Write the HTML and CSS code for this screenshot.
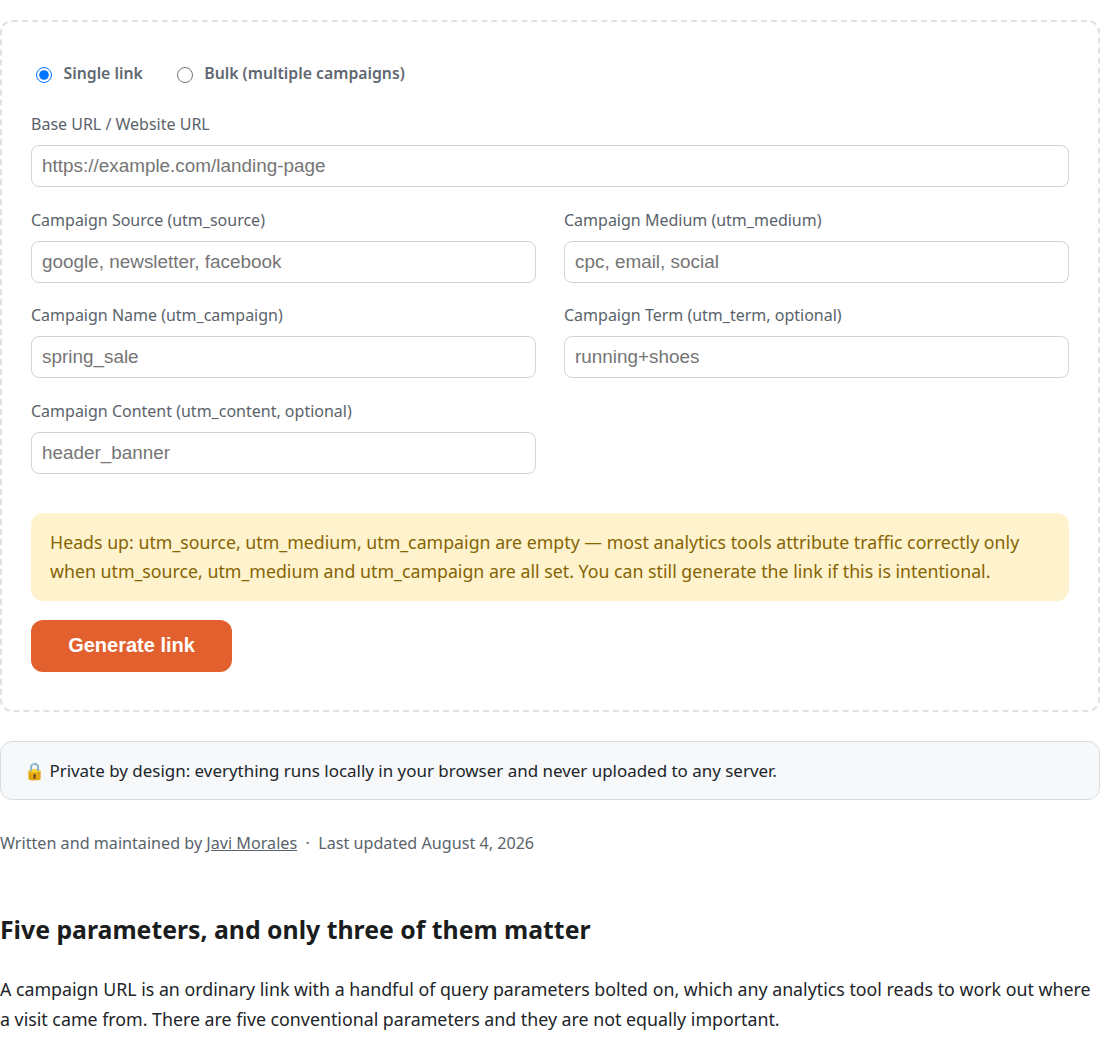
FILE: index.html

```html
<!DOCTYPE html>
<html lang="en">
<head>
  <meta charset="UTF-8">
  <meta name="viewport" content="width=device-width, initial-scale=1.0">
  <title>UTM link builder</title>
  <link rel="stylesheet" href="styles.css">
</head>
<body>
  <div class="tool-card">
    <div class="mode-group">
      <label class="mode-option"><input type="radio" name="mode" checked> Single link</label>
      <label class="mode-option"><input type="radio" name="mode"> Bulk (multiple campaigns)</label>
    </div>

    <div class="field">
      <label for="baseUrl">Base URL / Website URL</label>
      <input id="baseUrl" type="text" placeholder="https://example.com/landing-page">
    </div>

    <div class="field-grid">
      <div class="field">
        <label for="source">Campaign Source (utm_source)</label>
        <input id="source" type="text" placeholder="google, newsletter, facebook">
      </div>
      <div class="field">
        <label for="medium">Campaign Medium (utm_medium)</label>
        <input id="medium" type="text" placeholder="cpc, email, social">
      </div>
      <div class="field">
        <label for="campaign">Campaign Name (utm_campaign)</label>
        <input id="campaign" type="text" placeholder="spring_sale">
      </div>
      <div class="field">
        <label for="term">Campaign Term (utm_term, optional)</label>
        <input id="term" type="text" placeholder="running+shoes">
      </div>
      <div class="field">
        <label for="content">Campaign Content (utm_content, optional)</label>
        <input id="content" type="text" placeholder="header_banner">
      </div>
    </div>

    <div class="warning">Heads up: utm_source, utm_medium, utm_campaign are empty — most analytics tools attribute traffic correctly only when utm_source, utm_medium and utm_campaign are all set. You can still generate the link if this is intentional.</div>

    <button type="button" class="generate">Generate link</button>
  </div>

  <div class="privacy">🔒 Private by design: everything runs locally in your browser and never uploaded to any server.</div>

  <p class="byline">Written and maintained by <a href="#">Javi Morales</a> &nbsp;·&nbsp; Last updated August 4, 2026</p>

  <h2>Five parameters, and only three of them matter</h2>
  <p class="body-text">A campaign URL is an ordinary link with a handful of query parameters bolted on, which any analytics tool reads to work out where a visit came from. There are five conventional parameters and they are not equally important.</p>
</body>
</html>
```

FILE: styles.css

```css
body {
  font-family: 'Noto Sans', sans-serif;
  background: #fff;
  color: #212529;
  font-size: 17.8px;
  line-height: 30px;
  margin: 0;
  padding-top: 20px;
}

.tool-card {
  border: 2px dashed #dee2e6;
  border-radius: 12px;
  padding: 29px;
  height: 692px;
  box-sizing: border-box;
}

.mode-group {
  display: flex;
  gap: 34px;
  padding-left: 5px;
  margin: 7px 0 24px;
}

.mode-option {
  display: flex;
  align-items: center;
  gap: 11.5px;
  font-size: 15.8px;
  font-weight: 600;
  color: #5f6871;
}

.mode-option input {
  width: 16px;
  height: 16px;
  margin: 4px 0 0;
  accent-color: #0075ff;
}

.field label {
  display: block;
  font-size: 16px;
  line-height: 24px;
  color: #5a636b;
  margin-bottom: 9px;
}

.field input {
  display: block;
  width: 100%;
  height: 42px;
  box-sizing: border-box;
  padding: 0 10px;
  border: 1px solid #ced4da;
  border-radius: 8px;
  font-family: 'Liberation Sans', sans-serif;
  font-size: 18.9px;
}

.field input::placeholder {
  color: #757575;
}

.field-grid {
  display: grid;
  grid-template-columns: 1fr 1fr;
  column-gap: 28px;
  row-gap: 20.4px;
  margin-top: 21px;
}

.warning {
  background: #fff3cd;
  color: #856404;
  border-radius: 12px;
  padding: 15px 19px 14px;
  margin-top: 39.2px;
  font-size: 17.75px;
  line-height: 29.5px;
}

.generate {
  display: block;
  width: 201px;
  height: 52px;
  margin-top: 19px;
  padding-bottom: 2px;
  background: #e2602e;
  color: #fff;
  border: none;
  border-radius: 12px;
  font-family: 'Liberation Sans', sans-serif;
  font-size: 20px;
  font-weight: bold;
  cursor: pointer;
}

.privacy {
  margin-top: 29px;
  background: #f6f8fa;
  border: 1px solid #d9dde1;
  border-radius: 12px;
  padding: 13.5px 23px;
  font-size: 16.95px;
}

.byline {
  margin: 28px 0 0;
  font-size: 16.15px;
  color: #5a636b;
}

.byline a {
  color: #5a636b;
}

h2 {
  margin: 54px 0 0;
  font-size: 24.8px;
  line-height: 34px;
  font-weight: 700;
  color: #1a1d20;
}

.body-text {
  margin: 28px 0 0;
  color: #212529;
}
```
